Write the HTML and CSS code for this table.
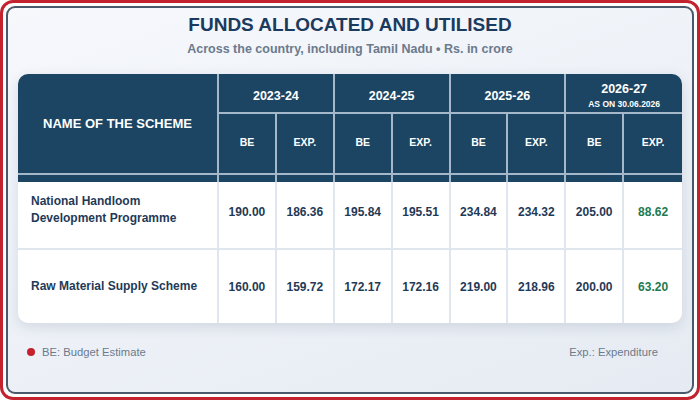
FILE: index.html
```html
<!DOCTYPE html>
<html lang="en">
<head>
<meta charset="utf-8">
<title>Funds Allocated and Utilised</title>
<link rel="stylesheet" href="styles.css">
</head>
<body>
<div class="frame">
  <div class="card">
    <h1 class="title">FUNDS ALLOCATED AND UTILISED</h1>
    <p class="subtitle">Across the country, including Tamil Nadu • Rs. in crore</p>
    <div class="table-wrap">
      <table class="funds">
        <colgroup>
          <col class="c-name">
          <col class="c-val"><col class="c-val">
          <col class="c-val"><col class="c-val">
          <col class="c-val"><col class="c-val">
          <col class="c-val"><col class="c-val">
        </colgroup>
        <thead>
          <tr class="r1">
            <th rowspan="2" class="name-head">NAME OF THE SCHEME</th>
            <th colspan="2">2023-24</th>
            <th colspan="2">2024-25</th>
            <th colspan="2">2025-26</th>
            <th colspan="2" class="last">2026-27<span class="asof">AS ON 30.06.2026</span></th>
          </tr>
          <tr class="r2">
            <th>BE</th><th>EXP.</th>
            <th>BE</th><th>EXP.</th>
            <th>BE</th><th>EXP.</th>
            <th>BE</th><th class="last">EXP.</th>
          </tr>
          <tr class="spacer">
            <td></td><td></td><td></td><td></td><td></td><td></td><td></td><td></td><td class="last"></td>
          </tr>
        </thead>
        <tbody>
          <tr class="b1">
            <td class="scheme">National Handloom<br>Development Programme</td>
            <td>190.00</td><td>186.36</td>
            <td>195.84</td><td>195.51</td>
            <td>234.84</td><td>234.32</td>
            <td>205.00</td><td class="last green">88.62</td>
          </tr>
          <tr class="b2">
            <td class="scheme">Raw Material Supply Scheme</td>
            <td>160.00</td><td>159.72</td>
            <td>172.17</td><td>172.16</td>
            <td>219.00</td><td>218.96</td>
            <td>200.00</td><td class="last green">63.20</td>
          </tr>
        </tbody>
      </table>
    </div>
    <div class="footer">
      <div class="legend"><span class="dot"></span>BE: Budget Estimate</div>
      <div class="legend">Exp.: Expenditure</div>
    </div>
  </div>
</div>
</body>
</html>
```
FILE: styles.css
```css
html, body {
  margin: 0;
  padding: 0;
}
body {
  width: 700px;
  height: 400px;
  font-family: "Liberation Sans", Arial, sans-serif;
  background: #ffffff;
}
.frame {
  box-sizing: border-box;
  width: 700px;
  height: 400px;
  border: 3px solid #c3222f;
  border-radius: 13px;
  padding: 3px;
  background: #ffffff;
}
.card {
  box-sizing: border-box;
  height: 100%;
  border: 2px solid #4b5a6a;
  border-radius: 9px;
  padding: 5px 10px 0;
  background: linear-gradient(160deg, #f6f8fc 0%, #edf1f7 55%, #e6ebf3 100%);
}
.title {
  margin: 0;
  font-size: 19px;
  line-height: 24px;
  font-weight: 700;
  text-align: center;
  color: #1b3b5e;
}
.subtitle {
  margin: 4px 0 17px;
  font-size: 12.5px;
  line-height: 16px;
  font-weight: 700;
  text-align: center;
  color: #6b7a8d;
}
.table-wrap {
  border-radius: 10px;
  overflow: hidden;
  background: #ffffff;
  box-shadow: 0 4px 14px rgba(25, 45, 75, 0.13);
}
.funds {
  width: 664px;
  table-layout: fixed;
  border-collapse: separate;
  border-spacing: 0;
}
.c-name { width: 201px; }
.c-val { width: 57.875px; }

.funds thead th,
.funds thead td {
  background: #1b4563;
  color: #ffffff;
  font-weight: 700;
  text-align: center;
  padding: 0;
  border-right: 2px solid #a5b8c9;
  border-bottom: 2px solid #a5b8c9;
}
.funds thead .last { border-right: none; }
.funds .r1 { height: 40px; }
.funds .r1 th {
  font-size: 12.5px;
  line-height: 15px;
  padding-top: 6px;
}
.funds .r1 th.name-head {
  font-size: 13px;
  padding-top: 0;
}
.asof {
  display: block;
  margin-top: 2px;
  font-size: 8.5px;
  line-height: 11px;
}
.funds .r2 { height: 61px; }
.funds .r2 th {
  font-size: 10.5px;
  line-height: 14px;
  padding-bottom: 3px;
}
.funds thead .spacer { height: 7px; }
.funds thead .spacer td {
  border-bottom: none;
  height: 7px;
  line-height: 0;
  font-size: 0;
}

.funds tbody td {
  border-right: 2px solid #dfe6ee;
  border-bottom: 2px solid #dfe6ee;
  text-align: center;
  font-size: 12px;
  font-weight: 700;
  color: #1f3a57;
  padding: 0;
}
.funds tbody .last { border-right: none; }
.funds tbody tr:last-child td { border-bottom: none; }
.funds .b1 { height: 68px; }
.funds .b1 td { padding-bottom: 7px; }
.funds .b2 { height: 73px; }
.funds tbody td.scheme {
  text-align: left;
  padding-left: 13px;
  line-height: 17px;
}
.funds .b1 td.scheme { padding-bottom: 10px; }
.funds tbody td.green { color: #1d7a4f; }

.footer {
  display: flex;
  justify-content: space-between;
  align-items: center;
  margin-top: 21px;
  padding: 0 24px 0 9px;
  font-size: 11.25px;
  line-height: 16px;
  color: #6b7a8c;
}
.legend {
  display: flex;
  align-items: center;
  gap: 7px;
}
.dot {
  width: 8px;
  height: 8px;
  border-radius: 50%;
  background: #c4202e;
}
```
